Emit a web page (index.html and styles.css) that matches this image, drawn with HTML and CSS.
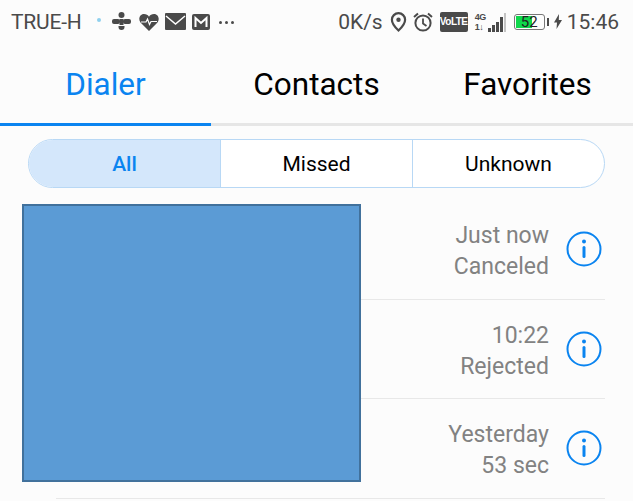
FILE: index.html
```html
<!DOCTYPE html>
<html lang="en">
<head>
    <meta charset="UTF-8">
    <meta name="viewport" content="width=device-width, initial-scale=1.0">
    <title>Dialer</title>
    <link rel="stylesheet" href="styles.css">
</head>
<body>
    <div class="status-bar">
        <div class="status-left">
            <span class="carrier">TRUE-H</span>
            <span class="dot"></span>
            <svg class="ic-game" width="19" height="19" viewBox="0 0 19 19"><circle cx="9.500" cy="3" r="3" fill="#4a4a4a"/><rect x="0" y="7" width="8" height="5" rx="2" fill="#4a4a4a"/><rect x="11" y="7" width="8" height="5" rx="2" fill="#4a4a4a"/><path d="M6.500 14h6v1a3 3 0 0 1-6 0z" fill="#4a4a4a"/><rect x="7.500" y="7" width="4" height="6" fill="#4a4a4a"/></svg>
            <svg class="ic-heart" width="20" height="18" viewBox="0 0 20 18"><path d="M10 18 1.500 9.500C-1 6.500.5 1 5 1c2.200 0 4 1 5 2.800C11 2 12.800 1 15 1c4.500 0 6 5.500 3.500 8.500z" fill="#4a4a4a"/><path d="M2 9h5l1.500-3 2 5.500L12 8.500h6" fill="none" stroke="#fff" stroke-width="1.200"/></svg>
            <svg class="ic-mail" width="21" height="17" viewBox="0 0 21 17"><rect width="21" height="17" rx="1" fill="#4a4a4a"/><path d="M1 3l9.500 8L20 3" fill="none" stroke="#fff" stroke-width="1.500"/></svg>
            <svg class="ic-gmail" width="18" height="16" viewBox="0 0 18 16"><rect width="18" height="16" rx="2" fill="#4a4a4a"/><path d="M3.500 13V4L9 9l5.500-5v9" fill="none" stroke="#fff" stroke-width="2"/></svg>
            <span class="more"><i></i><i></i><i></i></span>
        </div>
        <div class="status-right">
            <span class="speed">0K/s</span>
            <svg width="17" height="20" viewBox="0 0 16 20"><path d="M8 1.200a6.600 6.600 0 0 0-6.600 6.600C1.400 12.500 8 18.500 8 18.500s6.600-6 6.600-10.700A6.600 6.600 0 0 0 8 1.200z" fill="none" stroke="#4a4a4a" stroke-width="2.200"/><circle cx="8" cy="7.800" r="2.200" fill="#4a4a4a"/></svg>
            <svg width="20" height="20" viewBox="0 0 20 20"><circle cx="10" cy="11" r="7.600" fill="none" stroke="#4a4a4a" stroke-width="2"/><path d="M10 6.500V11.500L13.500 14" fill="none" stroke="#4a4a4a" stroke-width="1.800"/><path d="M1 5 5 1.500M19 5 15 1.500" stroke="#4a4a4a" stroke-width="2"/></svg>
            <span class="volte">VoLTE</span>
            <div class="signal">
                <div class="net"><span>4G</span><span>1↓</span></div>
                <span class="bar b1"></span><span class="bar b2"></span><span class="bar b3"></span><span class="bar b4"></span><span class="bar b5"></span>
            </div>
            <div class="battery"><div class="level"></div><span>52</span></div>
            <span class="nub"></span>
            <svg width="8" height="15" viewBox="0 0 8 15"><path d="M5 0 0 8.500h3L2.500 15 8 6H4.800z" fill="#4a4a4a"/></svg>
            <span class="clock">15:46</span>
        </div>
    </div>

    <div class="tabs">
        <div class="tab active">Dialer</div>
        <div class="tab">Contacts</div>
        <div class="tab">Favorites</div>
    </div>

    <div class="filter">
        <div class="seg selected">All</div>
        <div class="seg">Missed</div>
        <div class="seg">Unknown</div>
    </div>

    <div class="calls">
        <div class="redacted"></div>
        <div class="call">
            <div class="call-text"><span>Just now</span><span>Canceled</span></div>
            <svg class="info" width="36" height="36" viewBox="0 0 36 36"><circle cx="18" cy="18" r="16.500" fill="none" stroke="#0a84f0" stroke-width="2"/><circle cx="18" cy="10.500" r="2" fill="#0a84f0"/><rect x="16.500" y="15" width="3" height="12" rx="1.500" fill="#0a84f0"/></svg>
        </div>
        <div class="call">
            <div class="call-text"><span>10:22</span><span>Rejected</span></div>
            <svg class="info" width="36" height="36" viewBox="0 0 36 36"><circle cx="18" cy="18" r="16.500" fill="none" stroke="#0a84f0" stroke-width="2"/><circle cx="18" cy="10.500" r="2" fill="#0a84f0"/><rect x="16.500" y="15" width="3" height="12" rx="1.500" fill="#0a84f0"/></svg>
        </div>
        <div class="call">
            <div class="call-text"><span>Yesterday</span><span>53 sec</span></div>
            <svg class="info" width="36" height="36" viewBox="0 0 36 36"><circle cx="18" cy="18" r="16.500" fill="none" stroke="#0a84f0" stroke-width="2"/><circle cx="18" cy="10.500" r="2" fill="#0a84f0"/><rect x="16.500" y="15" width="3" height="12" rx="1.500" fill="#0a84f0"/></svg>
        </div>
    </div>
</body>
</html>
```
FILE: styles.css
```css
html, body {
    height: 100%;
}
body {
    margin: 0;
    height: 501px;
    overflow: hidden;
    background: #fcfcfc;
    font-family: Roboto, "Liberation Sans", sans-serif;
    color: #000;
}
.status-bar {
    height: 44px;
    display: flex;
    align-items: center;
    justify-content: space-between;
    padding: 0 14px 1px 11px;
    box-sizing: border-box;
    color: #4a4a4a;
}
.status-left, .status-right {
    display: flex;
    align-items: center;
}
.carrier {
    font-size: 21px;
    width: 86px;
    letter-spacing: -0.2px;
}
.dot {
    width: 4px;
    height: 4px;
    border-radius: 50%;
    background: #8fd0ee;
    margin: 0 11px 4px 0;
}
.ic-game { margin-right: 8px; }
.ic-heart { margin-right: 6px; }
.ic-mail { margin-right: 6px; }
.ic-gmail { margin-right: 9px; }
.more {
    display: flex;
    gap: 3px;
    margin-top: 1px;
}
.more i {
    width: 3px;
    height: 3px;
    border-radius: 50%;
    background: #4a4a4a;
}
.status-right svg {
    flex: none;
}
.speed {
    font-size: 21px;
    margin-right: 7px;
}
.status-right > svg:nth-of-type(1) { margin-right: 6px; }
.status-right > svg:nth-of-type(2) { margin-right: 7px; }
.volte {
    width: 28px;
    height: 20px;
    background: #4a4a4a;
    color: #fff;
    border-radius: 2px;
    font-size: 10px;
    font-weight: 700;
    line-height: 20px;
    text-align: center;
    font-family: "Liberation Sans", sans-serif;
    letter-spacing: -0.5px;
    margin-right: 7px;
}
.signal {
    display: flex;
    align-items: flex-end;
    height: 20px;
    gap: 1px;
    margin-right: 8px;
}
.net {
    display: flex;
    flex-direction: column;
    font-size: 9px;
    font-weight: 700;
    line-height: 10px;
    width: 12px;
    font-family: "Liberation Sans", sans-serif;
    white-space: nowrap;
    letter-spacing: -0.5px;
}
.bar {
    width: 3px;
    background: #4a4a4a;
}
.b1 { height: 4px; }
.b2 { height: 7px; }
.b3 { height: 10px; }
.b4 { height: 15px; }
.b5 { height: 19px; width: 2px; background: #c4c4c4; }
.battery {
    position: relative;
    width: 31px;
    height: 16px;
    border: 1px solid #777;
    border-radius: 3px;
    box-sizing: border-box;
    overflow: hidden;
    text-align: center;
    font-size: 15px;
    line-height: 15px;
    color: #222;
}
.level {
    position: absolute;
    left: 1px;
    top: 1px;
    bottom: 1px;
    width: 16px;
    background: #0fd84c;
}
.battery span {
    position: relative;
}
.nub {
    width: 2px;
    height: 8px;
    background: #4a4a4a;
    margin: 0 5px 0 2px;
}
.clock {
    font-size: 21px;
    margin-left: 5px;
}
.tabs {
    height: 79px;
    display: flex;
    border-bottom: 3px solid #e6e6e6;
}
.tab {
    flex: 1;
    text-align: center;
    font-size: 31.500px;
    line-height: 82px;
    height: 79px;
    margin-bottom: -3px;
}
.tab.active {
    color: #0a84f0;
    border-bottom: 3px solid #0a84f0;
}
.filter {
    display: flex;
    margin: 13px 28px 0;
    height: 49px;
    border: 1px solid #b8d8f5;
    border-radius: 25px;
    box-sizing: border-box;
    overflow: hidden;
    background: #fff;
}
.seg {
    flex: 1;
    text-align: center;
    font-size: 21px;
    line-height: 49px;
    border-left: 1px solid #b8d8f5;
}
.seg:first-child {
    border-left: none;
}
.seg.selected {
    background: #d4e7fb;
    color: #0a84f0;
    font-weight: 500;
}
.calls {
    position: relative;
    margin: 12px 28px 0 56px;
}
.call {
    height: 99.500px;
    display: flex;
    align-items: center;
    justify-content: flex-end;
    border-bottom: 1px solid #e8e8e8;
    box-sizing: border-box;
    padding-right: 3px;
}
.call-text {
    display: flex;
    flex-direction: column;
    align-items: flex-end;
    font-size: 23px;
    line-height: 31px;
    color: #828282;
    margin: 4px 17px 0 0;
}
.redacted {
    position: absolute;
    left: -34px;
    top: 4px;
    width: 339px;
    height: 278px;
    box-sizing: border-box;
    background: #5b9bd5;
    border: 2px solid #41719c;
}
```
